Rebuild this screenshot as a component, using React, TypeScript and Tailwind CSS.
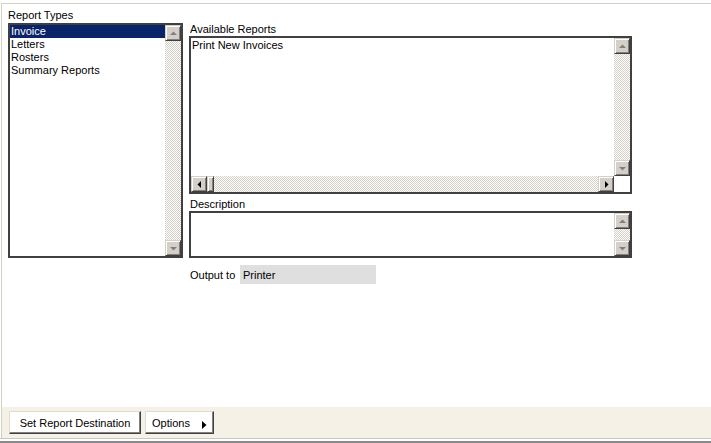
import React, { useId } from 'react'

type Dir = 'up' | 'down' | 'left' | 'right'

const ARROWS: Record<Dir, string> = {
  up: '0,5 7,5 3.5,1.5',
  down: '0,2 7,2 3.5,5.5',
  left: '5,0 5,7 1.5,3.5',
  right: '2,0 2,7 5.5,3.5',
}

function ScrollBtn({ dir, off }: { dir: Dir; off?: boolean }) {
  return (
    <div className="w-[16px] h-[16px] shrink-0 bg-[#d4d0c8] border border-t-[#d4d0c8] border-l-[#d4d0c8] border-r-[#404040] border-b-[#404040] shadow-[inset_1px_1px_#ffffff,inset_-1px_-1px_#808080] flex items-center justify-center">
      <svg width="7" height="7" viewBox="0 0 7 7">
        <polygon points={ARROWS[dir]} fill={off ? '#808080' : '#000000'} />
      </svg>
    </div>
  )
}

// trilho pontilhado (dither 1px)
function Track() {
  const id = useId().replace(/:/g, '')
  return (
    <div className="relative flex-1 min-w-0 min-h-0 overflow-hidden bg-white">
      <svg shapeRendering="crispEdges" className="absolute inset-0 w-full h-full block">
        <defs>
          <pattern id={`p${id}`} width="2" height="2" patternUnits="userSpaceOnUse">
            <rect x="0" y="0" width="1" height="1" fill="#d4d0c8" />
            <rect x="1" y="1" width="1" height="1" fill="#d4d0c8" />
          </pattern>
        </defs>
        <rect width="100%" height="100%" fill={`url(#p${id})`} />
      </svg>
    </div>
  )
}

function VScroll() {
  return (
    <div className="w-[16px] shrink-0 flex flex-col">
      <ScrollBtn dir="up" off />
      <Track />
      <ScrollBtn dir="down" off />
    </div>
  )
}

const tipos = ['Invoice', 'Letters', 'Rosters', 'Summary Reports']

export default function App() {
  return (
    <div className="w-[711px] h-[443px] bg-white flex flex-col overflow-hidden text-[11px] leading-[13px] text-black font-['Liberation_Sans',Arial,sans-serif]">
      <div className="flex-1 flex flex-col mt-[3px] ml-[1px] border-t border-l border-[#d4d0c8]">
        {/* Conteúdo */}
        <div className="flex-1 flex items-start pl-[6px] pt-[5px] gap-[6px]">
          <div className="w-[175px] flex flex-col">
            <div className="h-[13px] mb-[1px]">Report Types</div>
            <div className="h-[235px] border-2 border-[#404040] flex">
              <div className="flex-1 flex flex-col">
                {tipos.map((t, i) => (
                  <div
                    key={t}
                    className={`h-[13px] pl-[1px] whitespace-nowrap ${i === 0 ? 'bg-[#0a246a] text-white' : ''}`}
                  >
                    {t}
                  </div>
                ))}
              </div>
              <VScroll />
            </div>
          </div>

          <div className="w-[443px] flex flex-col pt-[14px]">
            <div className="h-[13px] pl-[1px]">Available Reports</div>
            <div className="h-[158px] border-2 border-[#404040] flex flex-col">
              <div className="flex-1 min-h-0 flex">
                <div className="flex-1 pt-[1px] pl-[1px]">Print New Invoices</div>
                <VScroll />
              </div>
              <div className="h-[16px] shrink-0 flex">
                <ScrollBtn dir="left" />
                <div className="w-[7px] h-[16px] shrink-0 bg-[#d4d0c8] border border-t-[#d4d0c8] border-l-[#d4d0c8] border-r-[#404040] border-b-[#404040] shadow-[inset_1px_1px_#ffffff,inset_-1px_-1px_#808080]" />
                <Track />
                <ScrollBtn dir="right" />
                <div className="w-[16px] shrink-0 bg-white" />
              </div>
            </div>

            <div className="h-[13px] mt-[4px] pl-[1px]">Description</div>
            <div className="h-[47px] border-2 border-[#404040] flex">
              <div className="flex-1" />
              <VScroll />
            </div>

            <div className="flex items-center mt-[7px] pl-[1px]">
              <span className="w-[50px] pt-[2px]">Output to</span>
              <div className="w-[136px] h-[19px] bg-[#dfdfdf] flex items-center pl-[3px] pt-[1px]">Printer</div>
            </div>
          </div>
        </div>

        {/* Barra inferior */}
        <div className="h-[31px] bg-[#f5f1e6] flex items-start pt-[4px] pl-[7px] gap-[4px]">
          <button className="w-[132px] h-[23px] bg-white border border-t-[#dedbd2] border-l-[#dedbd2] border-r-[#404040] border-b-[#404040] shadow-[inset_-1px_-1px_#808080] flex items-center justify-center pt-[2px]">
            Set Report Destination
          </button>
          <button className="w-[69px] h-[23px] bg-white border border-t-[#dedbd2] border-l-[#dedbd2] border-r-[#404040] border-b-[#404040] shadow-[inset_-1px_-1px_#808080] flex items-center pl-[6px] pt-[2px]">
            <span>Options</span>
            <svg width="5" height="8" viewBox="0 0 5 8" className="ml-[12px] mt-[2px]">
              <polygon points="0,0 0,8 4.5,4" fill="#000" />
            </svg>
          </button>
        </div>
      </div>
      <div className="h-[1px] bg-[#c8c8c8]" />
      <div className="h-[2px] bg-white" />
      <div className="h-[2px] bg-[#8a8a8a]" />
    </div>
  )
}
